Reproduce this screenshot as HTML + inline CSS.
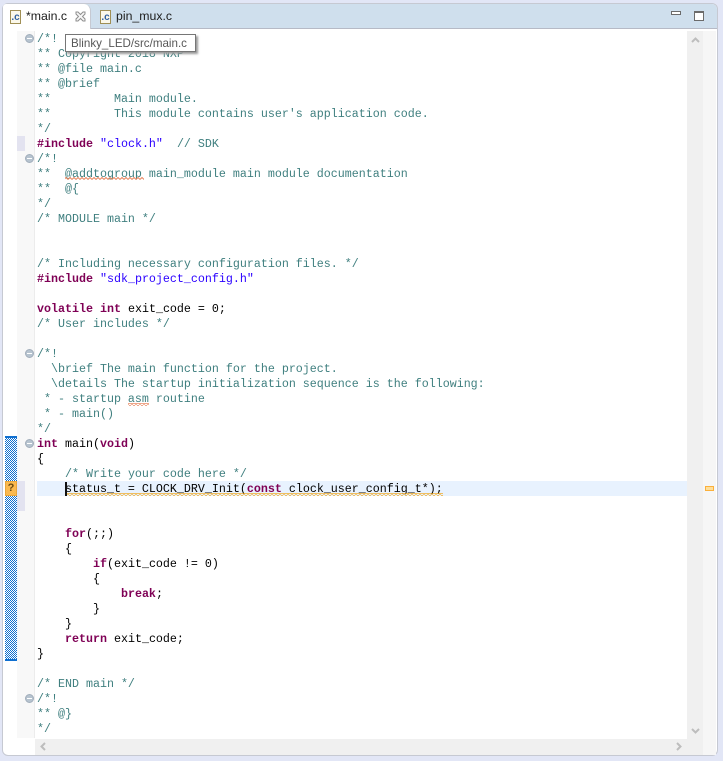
<!DOCTYPE html>
<html><head><meta charset="utf-8"><style>
html,body{margin:0;padding:0}
body{width:723px;height:761px;background:#e2e6f6;position:relative;overflow:hidden;font-family:"Liberation Sans",sans-serif}
div,pre,svg{position:absolute}
#frame{left:2px;top:3px;width:716px;height:753px;background:#fff;border:1px solid #c6c9d2;box-sizing:border-box;border-radius:6px}
#tabbar{left:3px;top:4px;width:714px;height:24px;background:#cfdfed;border-radius:5px 5px 0 0}
#tabline{left:3px;top:28px;width:714px;height:1px;background:#b6bac6}
#tab{left:3px;top:4px;width:88px;height:25px;background:#fff;border-radius:3px 7px 0 0;border-right:1px solid #c6c9d2;box-sizing:border-box}
.tt{font-size:12.3px;color:#1c1c1c;top:9px;line-height:15px;white-space:pre}
.fico{width:11px;height:14px;border:1px solid #a08f55;background:#fbf8ea;box-sizing:border-box;font:bold 10px/13px "Liberation Sans",sans-serif;color:#2f5f9f;text-align:center;top:10px}
#code{left:37px;top:32px;margin:0;font:11.67px/15px "Liberation Mono",monospace;color:#000;white-space:pre;z-index:3}
#code i{font-style:normal;color:#3f7f7f}
#code b{color:#7f0055;font-weight:bold}
#code u{text-decoration:none;color:#2a00ff}
.fold{left:25px;width:9px;height:9px;border-radius:50%;background:#b6c3cf;border:1px solid #a2aebb;box-sizing:border-box;z-index:4}
.fold:after{content:"";position:absolute;left:1px;top:3px;width:5px;height:1px;background:#fff}
#tip{left:65px;top:34px;width:131px;height:18px;background:#fff;border:1px solid #767676;box-sizing:border-box;box-shadow:2px 2px 2px #9a9a9a;font-size:11.6px;line-height:17px;color:#575757;padding-left:5px;z-index:6;white-space:pre}
</style></head><body>
<div id="frame"></div>
<div id="tabbar"></div>
<div id="tabline"></div>
<div id="tab"></div>
<div class="fico" style="left:10px">.c</div>
<div class="tt" style="left:26px">*main.c</div>
<svg style="left:75px;top:11px" width="11" height="11" viewBox="0 0 11 11"><path d="M1 1h2l2.500 2.500L8 1h2v2L7.500 5.500 10 8v2H8L5.500 7.500 3 10H1V8l2.500-2.500L1 3z" fill="#f7f7f7" stroke="#8e8e8e" stroke-width="1"/></svg>
<div class="fico" style="left:100px">.c</div>
<div class="tt" style="left:116px">pin_mux.c</div>
<div style="left:671px;top:11px;width:10px;height:4px;border:1px solid #6b6b6b;background:#fff;box-sizing:border-box"></div>
<div style="left:694px;top:11px;width:10px;height:10px;border:1px solid #6b6b6b;border-top-width:2px;background:#fff;box-sizing:border-box"></div>

<div style="left:17px;top:31px;width:17px;height:707px;background:#f8f8f8"></div>
<div style="left:34px;top:31px;width:1px;height:707px;background:#ececec"></div>
<div style="left:17px;top:136px;width:8px;height:15px;background:#e3e3f0"></div>
<div style="left:17px;top:481px;width:8px;height:30px;background:#e3e3f0"></div>
<div style="left:5px;top:436px;width:12px;height:225px;background:repeating-conic-gradient(#0f6fd0 0 25%,#fff 0 50%) 0 0/2px 2px"></div>
<div style="left:5px;top:436px;width:12px;height:2px;background:#0f6fd0"></div>
<div style="left:5px;top:659px;width:12px;height:2px;background:#0f6fd0"></div>
<div style="left:5px;top:481px;width:12px;height:15px;background:#fbb94f;border:1px solid #e8a53a;box-sizing:border-box;font:bold 11px/13px 'Liberation Sans',sans-serif;color:#6b4a10;text-align:center;z-index:3">?</div>
<div style="left:37px;top:481px;width:650px;height:15px;background:#e8f2fe"></div>
<div style="left:65px;top:482px;width:2px;height:14px;background:#111;z-index:5"></div>

<div class="fold" style="top:34px"></div>
<div class="fold" style="top:154px"></div>
<div class="fold" style="top:349px"></div>
<div class="fold" style="top:439px"></div>
<div class="fold" style="top:694px"></div>

<pre id="code"><i>/*!
** Copyright 2018 NXP
** @file main.c
** @brief
**         Main module.
**         This module contains user's application code.
*/</i>
<b>#include</b> <u>"clock.h"</u>  <i>// SDK
/*!
**  @addtogroup main_module main module documentation
**  @{
*/
/* MODULE main */


/* Including necessary configuration files. */</i>
<b>#include</b> <u>"sdk_project_config.h"</u>

<b>volatile</b> <b>int</b> exit_code = 0;
<i>/* User includes */

/*!
  \brief The main function for the project.
  \details The startup initialization sequence is the following:
 * - startup asm routine
 * - main()
*/</i>
<b>int</b> main(<b>void</b>)
{
    <i>/* Write your code here */</i>
    status_t = CLOCK_DRV_Init(<b>const</b> clock_user_config_t*);


    <b>for</b>(;;)
    {
        <b>if</b>(exit_code != 0)
        {
            <b>break</b>;
        }
    }
    <b>return</b> exit_code;
}

<i>/* END main */
/*!
** @}
*/</i></pre>

<svg style="left:0;top:0;z-index:4" width="723" height="761">
<defs>
<pattern id="wr" width="4" height="3" patternUnits="userSpaceOnUse"><path d="M0 2.500L2 .5L4 2.500" fill="none" stroke="#e8825a" stroke-width="1"/></pattern>
<pattern id="wy" width="4" height="3" patternUnits="userSpaceOnUse"><path d="M0 2.500L2 .5L4 2.500" fill="none" stroke="#f2a91f" stroke-width="1"/></pattern>
</defs>
<rect x="65" y="177" width="79" height="3" fill="url(#wr)"/>
<rect x="128" y="403" width="21" height="3" fill="url(#wr)"/>
<rect x="65" y="493" width="378" height="3" fill="url(#wy)"/>
</svg>

<div id="tip">Blinky_LED/src/main.c</div>

<div style="left:687px;top:31px;width:16px;height:708px;background:#f0f0f0"></div>
<div style="left:703px;top:31px;width:13px;height:724px;background:#f6f6f6"></div>
<div style="left:35px;top:739px;width:668px;height:16px;background:#f0f0f0"></div>
<svg style="left:691px;top:36px" width="9" height="8"><path d="M1 6L4.500 2.500L8 6" fill="none" stroke="#bdbdbd" stroke-width="2"/></svg>
<svg style="left:691px;top:727px" width="9" height="8"><path d="M1 2L4.500 5.500L8 2" fill="none" stroke="#bdbdbd" stroke-width="2"/></svg>
<svg style="left:39px;top:742px" width="8" height="9"><path d="M6 1L2.500 4.500L6 8" fill="none" stroke="#bdbdbd" stroke-width="2"/></svg>
<svg style="left:675px;top:742px" width="8" height="9"><path d="M2 1L5.500 4.500L2 8" fill="none" stroke="#bdbdbd" stroke-width="2"/></svg>
<div style="left:705px;top:486px;width:9px;height:5px;background:#ffdf9a;border:1px solid #fbb03b;box-sizing:border-box"></div>
</body></html>
